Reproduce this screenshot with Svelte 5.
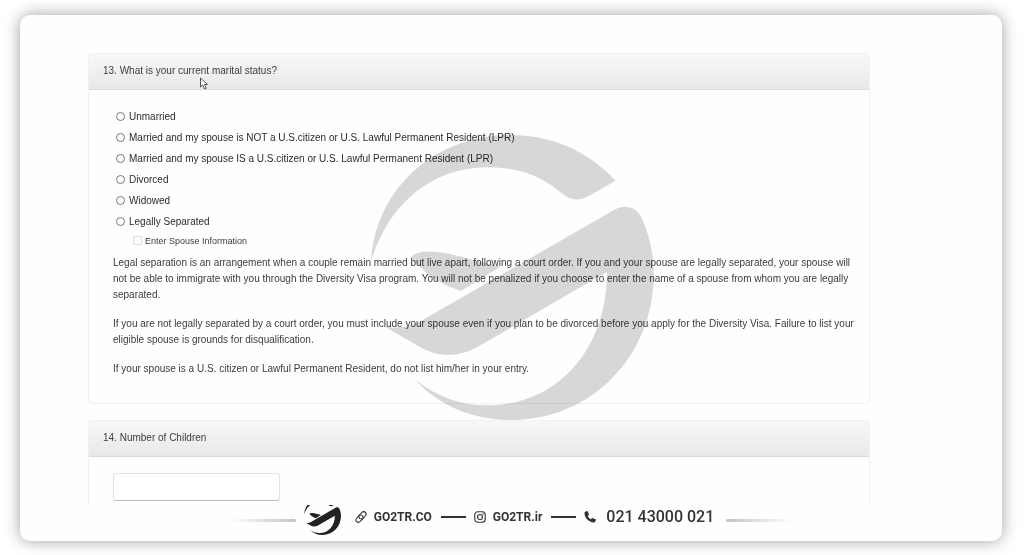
<script lang="ts">
	const statuses = [
		'Unmarried',
		'Married and my spouse is NOT a U.S.citizen or U.S. Lawful Permanent Resident (LPR)',
		'Married and my spouse IS a U.S.citizen or U.S. Lawful Permanent Resident (LPR)',
		'Divorced',
		'Widowed',
		'Legally Separated'
	];

	let status = $state('');
	let children = $state('');
</script>

{#snippet logoShape()}
	<path d="M92 425C105 205 285 45 510 45C630 45 740 90 826 182L745 228C715 245 688 240 662 218C600 165 530 142 440 142C270 142 140 260 92 425Z" />
	<path d="M212 412C228 394 255 392 290 396C345 402 400 422 480 440L362 513C325 500 290 485 262 462C240 442 222 425 212 412Z" />
	<path d="M130 618C170 628 205 622 240 604L825 268C855 252 888 262 902 290C930 350 940 405 940 465C940 710 750 900 515 900C400 900 300 860 225 780C290 830 360 856 440 856C650 856 800 690 800 455L410 682C350 715 290 710 240 682Z" />
{/snippet}

<main class="card">
	<div class="form">
		<section class="panel">
			<h2 class="heading">13. What is your current marital status?</h2>
			<div class="body">
				<div class="options" role="radiogroup" aria-label="Current marital status">
					{#each statuses as item}
						<label class="option">
							<input type="radio" name="status" value={item} bind:group={status} />
							<span>{item}</span>
						</label>
					{/each}
				</div>
				<label class="spouse">
					<input type="checkbox" disabled />
					<span>Enter Spouse Information</span>
				</label>
				<p>
					Legal separation is an arrangement when a couple remain married but live apart, following a court order. If you and your spouse are legally separated, your spouse will not be able to immigrate with you through the Diversity Visa program. You will not be penalized if you choose to enter the name of a spouse from whom you are legally separated.
				</p>
				<p>
					If you are not legally separated by a court order, you must include your spouse even if you plan to be divorced before you apply for the Diversity Visa. Failure to list your eligible spouse is grounds for disqualification.
				</p>
				<p>If your spouse is a U.S. citizen or Lawful Permanent Resident, do not list him/her in your entry.</p>
			</div>
		</section>

		<section class="panel last">
			<h2 class="heading" id="children-title">14. Number of Children</h2>
			<div class="body">
				<input class="text" type="text" aria-labelledby="children-title" bind:value={children} />
			</div>
		</section>
	</div>

	<footer class="contact">
		<span class="fade"></span>
		<svg class="mark" viewBox="90 210 850 690" aria-hidden="true">
			{@render logoShape()}
		</svg>
		<a class="link" href="#site">
			<svg class="icon" viewBox="0 0 24 24" aria-hidden="true">
				<g fill="none" stroke="currentColor" stroke-width="2.2" stroke-linecap="round">
					<path d="M10 15a5 5 0 0 1-1-7l5-5a4.500 4.500 0 0 1 7 6l-5 6a4.500 4.500 0 0 1-4 1" />
					<path d="M14 9a5 5 0 0 1 1 7l-5 5a4.500 4.500 0 0 1-7-6l5-6a4.500 4.500 0 0 1 4-1" />
				</g>
			</svg>
			GO2TR.CO
		</a>
		<span class="dash"></span>
		<a class="link" href="#instagram">
			<svg class="icon" viewBox="0 0 24 24" aria-hidden="true">
				<g fill="none" stroke="currentColor" stroke-width="2.2">
					<rect x="1.5" y="1.5" width="21" height="21" rx="6" />
					<circle cx="12" cy="12" r="5" />
				</g>
				<circle cx="18" cy="6" r="1.4" fill="currentColor" />
			</svg>
			GO2TR.ir
		</a>
		<span class="dash"></span>
		<a class="link phone" href="tel:02143000021">
			<svg class="icon" viewBox="0 0 24 24" aria-hidden="true">
				<path fill="currentColor" d="M1 3L5 0C6 0 7 0 7.500 1L10 7C10 8 9 9 7.500 10C9 13 11 15 14 16.500C15 15 16 14 17 14L23 16.500C24 17 24 18 23.500 19L21 23C13 24 0 15 1 3Z" />
			</svg>
			021 43000 021
		</a>
		<span class="fade right"></span>
	</footer>

	<svg class="watermark" viewBox="90 45 850 855" aria-hidden="true">
		{@render logoShape()}
	</svg>
	<svg class="cursor" viewBox="0 0 16 24" aria-hidden="true">
		<path d="M1 1V19L5.500 15L9 23L12.500 21.500L9 14H15Z" />
	</svg>
</main>

<style>
	:global(body) {
		margin: 0;
		background: #fff;
	}
	.card {
		position: relative;
		display: flex;
		flex-direction: column;
		margin: 15px 22px 14px 20px;
		border-radius: 10px;
		background: #fefefe;
		box-shadow: 0 0 16px rgba(0, 0, 0, 0.38);
		font-family: 'Liberation Sans', Arial, sans-serif;
		font-size: 10px;
		line-height: 16px;
		color: #3c3c3e;
	}
	.form {
		padding: 38px 132px 0 68px;
	}
	.panel {
		border: 1px solid #f1f0f2;
		border-radius: 4px;
	}
	.last {
		margin-top: 16px;
		border-bottom: 0;
		border-radius: 4px 4px 0 0;
	}
	.heading {
		margin: 0;
		padding: 9px 14px 10px;
		border-bottom: 1px solid #dddbde;
		border-radius: 4px 4px 0 0;
		background: linear-gradient(#f8f7f9, #e9e7ea);
		font-size: 10px;
		font-weight: 400;
	}
	.body {
		padding: 16px 8px 13px 24px;
	}
	.last .body {
		padding-bottom: 4px;
	}
	.options {
		padding-left: 3px;
	}
	.option {
		display: flex;
		align-items: center;
		gap: 4px;
		height: 21px;
		color: #2c2c2e;
	}
	input[type='radio'] {
		appearance: none;
		width: 9px;
		height: 9px;
		margin: 0;
		border: 1px solid #777;
		border-radius: 50%;
		background: #fff;
	}
	input[type='radio']:checked {
		background: #555;
	}
	.spouse {
		display: flex;
		align-items: center;
		gap: 3px;
		height: 17px;
		margin-bottom: 6px;
		padding-left: 20px;
		font-size: 9px;
	}
	input[type='checkbox'] {
		appearance: none;
		width: 9px;
		height: 9px;
		margin: 0;
		border: 1px solid #ddd;
		border-radius: 1px;
	}
	p {
		margin: 0 0 13px;
	}
	.text {
		display: block;
		box-sizing: border-box;
		width: 167px;
		height: 28px;
		padding: 0 8px;
		border: 1px solid #e2e1e3;
		border-bottom-color: #bbb;
		border-radius: 3px;
		background: #fff;
	}
	.contact {
		display: flex;
		justify-content: center;
		align-items: center;
		height: 24px;
		padding-bottom: 12px;
		font-family: Roboto, 'Open Sans', sans-serif;
		color: #333;
	}
	.link {
		display: flex;
		align-items: center;
		gap: 7px;
		font-size: 12px;
		font-weight: 700;
		color: inherit;
		text-decoration: none;
	}
	.phone {
		gap: 10px;
		font-size: 16px;
		font-weight: 500;
	}
	.icon {
		width: 12px;
		height: 12px;
	}
	.mark {
		align-self: flex-start;
		width: 37px;
		height: 30px;
		margin: 0 14px 0 8px;
		fill: #222;
	}
	.dash {
		width: 25px;
		height: 2px;
		margin: 0 8px 0 9px;
		background: #333;
	}
	.fade {
		width: 66px;
		height: 3px;
		margin-top: 6px;
		border-radius: 2px;
		background: linear-gradient(to right, transparent, #c4c4c4);
	}
	.fade.right {
		margin-left: 12px;
		background: linear-gradient(to left, transparent, #c4c4c4);
	}
	.watermark {
		position: absolute;
		top: 120px;
		left: 350px;
		width: 284px;
		height: 285px;
		fill: #d9d7d8;
		mix-blend-mode: multiply;
		pointer-events: none;
	}
	.cursor {
		position: absolute;
		top: 62px;
		left: 180px;
		width: 8px;
		height: 13px;
		fill: #fff;
		stroke: #555;
		stroke-width: 2;
	}
</style>
